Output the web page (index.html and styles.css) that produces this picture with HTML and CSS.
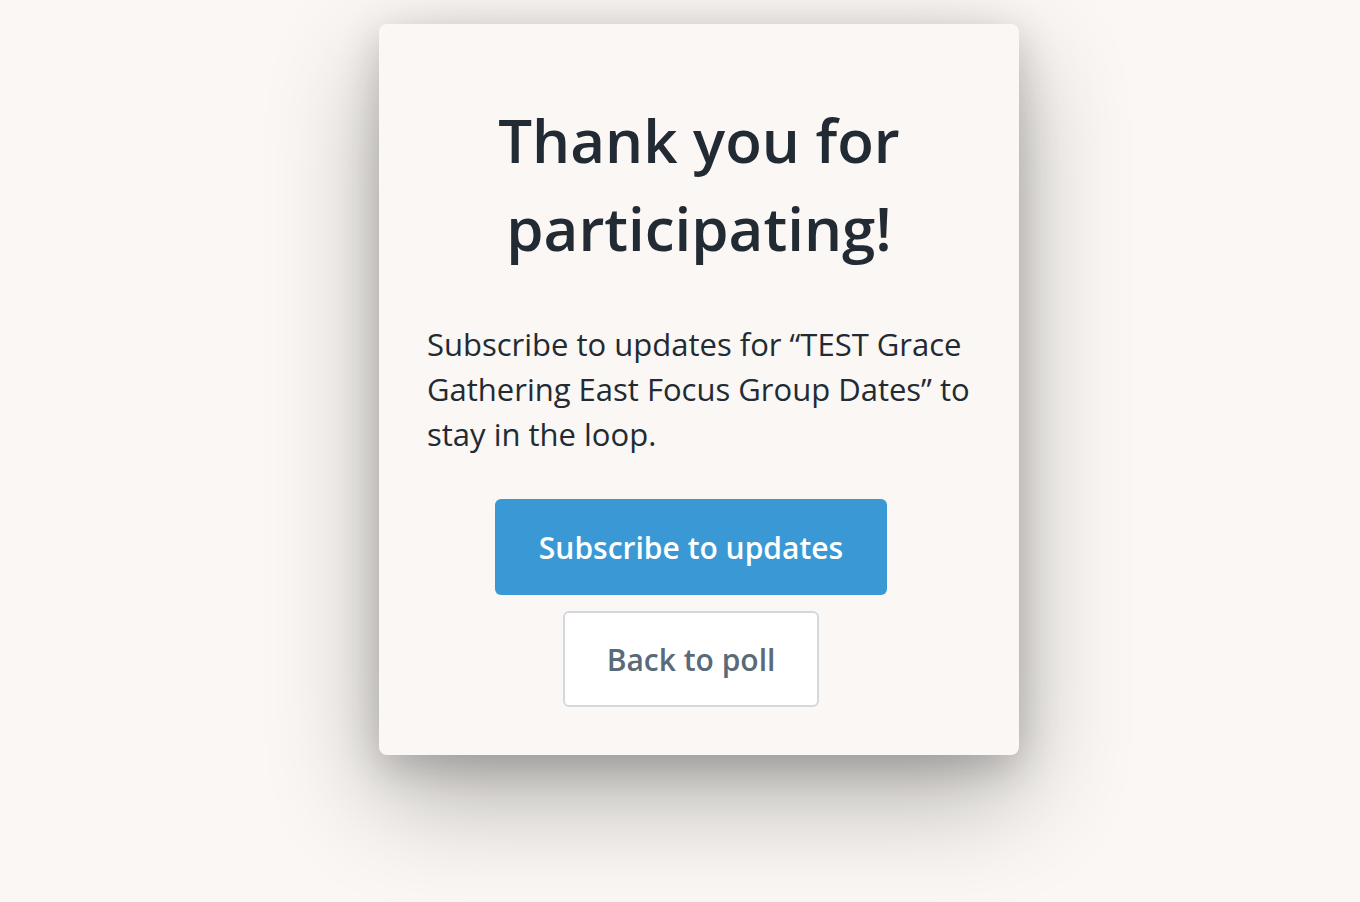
FILE: index.html
```html
<!DOCTYPE html>
<html lang="en">
  <head>
    <meta charset="UTF-8">
    <title>Thank you for participating!</title>
    <link rel="stylesheet" href="styles.css">
  </head>
  <body>
    <div class="page">
      <div class="card">
        <h1 class="title">Thank you for participating!</h1>
        <p class="message">Subscribe to updates for “TEST Grace Gathering East Focus Group Dates” to stay in the loop.</p>
        <div class="actions">
          <button class="btn btn-primary">Subscribe to updates</button>
          <button class="btn btn-outline">Back to poll</button>
        </div>
      </div>
    </div>
  </body>
</html>
```

FILE: styles.css
```css
body {
  font-family: 'Open Sans', 'Noto Sans', sans-serif;
  background-color: #faf7f4;
  color: #222a33;
  margin: 0;
  padding: 0;
}

.page {
  display: flex;
  justify-content: center;
  padding: 24px 0 0 38px;
  min-height: 878px;
}

.card {
  width: 640px;
  height: 731px;
  box-sizing: border-box;
  padding: 48px;
  background: #faf7f4;
  border-radius: 8px;
  box-shadow: 0 40px 110px rgba(0, 0, 0, 0.3), 0 12px 40px rgba(0, 0, 0, 0.18);
}

.title {
  text-align: center;
  font-size: 60px;
  line-height: 88px;
  font-weight: 600;
  margin: 24px 40px 0;
  color: #222a33;
}

.message {
  font-size: 31px;
  line-height: 45px;
  margin: 50px 0 42px;
}

.actions {
  display: flex;
  flex-direction: column;
  align-items: center;
  gap: 16px;
  padding-right: 16px;
}

.btn {
  font-family: inherit;
  font-size: 30px;
  font-weight: 600;
  height: 96px;
  padding: 0;
  white-space: nowrap;
  border-radius: 6px;
  cursor: pointer;
}

.btn-primary {
  width: 392px;
  background-color: #3a99d4;
  color: #ffffff;
  border: none;
}

.btn-outline {
  width: 256px;
  background-color: #ffffff;
  color: #5a6a78;
  border: 2px solid #d4d8dc;
}
```
